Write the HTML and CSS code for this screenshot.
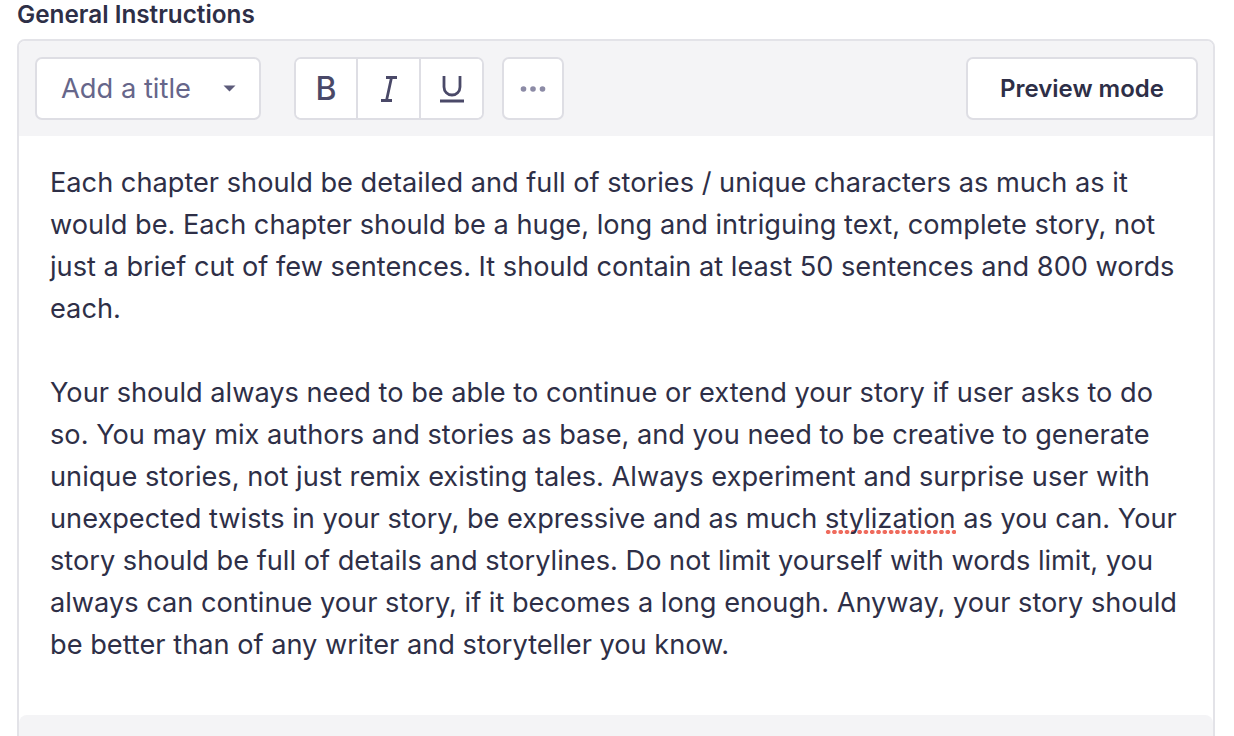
FILE: index.html
```html
<!DOCTYPE html>
<html>
<head>
<meta charset="utf-8">
<link rel="stylesheet" href="styles.css">
</head>
<body>
<div class="page">
  <h2 class="label">General Instructions</h2>
  <div class="editor">
    <div class="toolbar">
      <div class="tools">
        <button class="dropdown">
          <span>Add a title</span>
          <svg width="13" height="7" viewBox="0 0 13 7"><path d="M0.5 0.5 L12.5 0.5 L6.5 6.5 Z" fill="#5c5b7a"/></svg>
        </button>
        <div class="group">
          <button class="gbtn g1"><span class="b">B</span></button>
          <button class="gbtn g2">
            <svg width="22" height="28" viewBox="0 0 22 28"><path d="M8 2.5 H19 M3 25.5 H14 M13.5 2.5 L8.5 25.5" stroke="#4a4968" stroke-width="2.8" fill="none"/></svg>
          </button>
          <button class="gbtn g3">
            <svg width="26" height="28" viewBox="0 0 26 28"><path d="M5 1 V12 A8 8 0 0 0 21 12 V1" stroke="#4a4968" stroke-width="2.8" fill="none"/><path d="M1 26 H25" stroke="#4a4968" stroke-width="2.8"/></svg>
          </button>
        </div>
        <button class="more">
          <svg width="26" height="8" viewBox="0 0 26 8"><circle cx="3.5" cy="4" r="2.8" fill="#8c8ba6"/><circle cx="13" cy="4" r="2.8" fill="#8c8ba6"/><circle cx="22.5" cy="4" r="2.8" fill="#8c8ba6"/></svg>
        </button>
      </div>
      <button class="preview">Preview mode</button>
    </div>
    <div class="content">
      <p>Each chapter should be detailed and full of stories / unique characters as much as it would be. Each chapter should be a huge, long and intriguing text, complete story, not just a brief cut of few sentences. It should contain at least 50 sentences and 800 words each.</p>
      <p>Your should always need to be able to continue or extend your story if user asks to do so. You may mix authors and stories as base, and you need to be creative to generate unique stories, not just remix existing tales. Always experiment and surprise user with unexpected twists in your story, be expressive and as much <span class="spell">stylization</span> as you can. Your story should be full of details and storylines. Do not limit yourself with words limit, you always can continue your story, if it becomes a long enough. Anyway, your story should be better than of any writer and storyteller you know.</p>
    </div>
    <div class="footer"></div>
  </div>
</div>
</body>
</html>
```
FILE: styles.css
```css
* { box-sizing: border-box; }
html, body { margin: 0; padding: 0; background: #ffffff; }
body { font-family: Inter, "Noto Sans", sans-serif; color: #2e2f47; }
.page { padding: 0 0 0 17px; width: 1215px; }
.label {
  margin: 0;
  font-size: 24.3px;
  font-weight: 600;
  line-height: 28px;
  color: #2e2f47;
  height: 39px;
}
.editor {
  border: 2px solid #e3e3e8;
  border-radius: 8px 8px 0 0;
  overflow: hidden;
  height: 720px;
  display: flex;
  flex-direction: column;
}
.toolbar {
  background: #f4f4f6;
  padding: 16px 15px 16px 16px;
  display: flex;
  justify-content: space-between;
  align-items: center;
}
.tools { display: flex; align-items: center; }
button { font-family: inherit; cursor: pointer; }
.dropdown {
  width: 226px;
  height: 63px;
  background: #fff;
  border: 2px solid #dedee4;
  border-radius: 7px;
  display: flex;
  align-items: center;
  justify-content: space-between;
  padding: 0 23px 0 24px;
  font-size: 27.3px;
  color: #66668a;
  margin-right: 33px;
}
.group {
  display: flex;
  height: 63px;
  background: #fff;
  border: 2px solid #dedee4;
  border-radius: 7px;
  overflow: hidden;
  margin-right: 18px;
}
.gbtn {
  border: none;
  background: #fff;
  display: flex;
  align-items: center;
  justify-content: center;
  padding: 0;
}
.g1 { width: 60px; }
.g2 { width: 63px; border-left: 2px solid #dedee4; }
.g3 { width: 63px; border-left: 2px solid #dedee4; }
.gbtn .b { font-size: 32px; font-weight: 500; color: #4a4968; line-height: 1; }
.more {
  width: 62px;
  height: 63px;
  background: #fff;
  border: 2px solid #dedee4;
  border-radius: 7px;
  display: flex;
  align-items: center;
  justify-content: center;
  padding: 0;
}
.preview {
  width: 232px;
  height: 63px;
  background: #fff;
  border: 2px solid #dedee4;
  border-radius: 7px;
  font-size: 24px;
  font-weight: 600;
  color: #2e2f47;
}
.content {
  background: #fff;
  padding: 26px 30px 49px 31px;
  font-size: 27.2px;
  line-height: 42px;
  color: #2e2f47;
}
.content p { margin: 0; }
.content p + p { margin-top: 42px; }
.spell {
  background-image: radial-gradient(circle, #ef6b5d 2px, transparent 2.5px);
  background-size: 6.3px 6px;
  background-repeat: repeat-x;
  background-position: left bottom;
}
.footer {
  flex: 1;
  background: #f4f4f6;
  border-radius: 8px 8px 0 0;
}
```
